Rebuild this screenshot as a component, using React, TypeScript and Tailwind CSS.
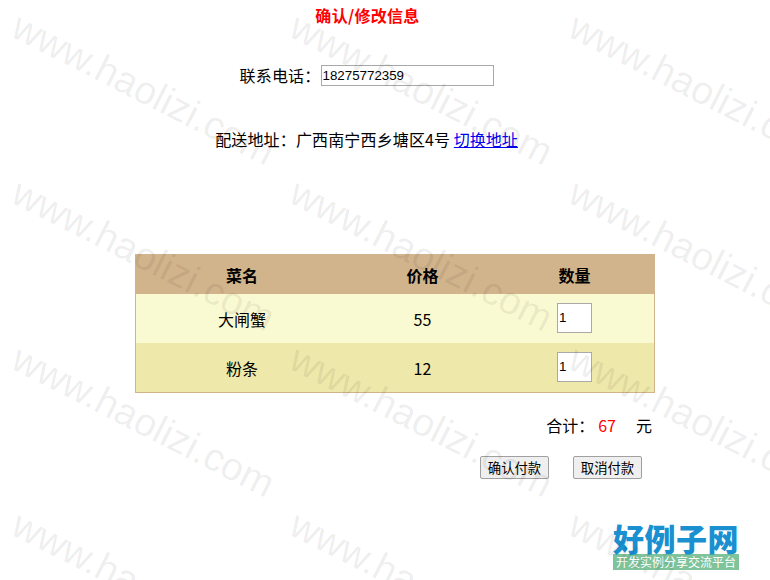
const cjk = "font-['Noto_Sans_CJK_SC','Liberation_Sans',sans-serif]";

const items = [
  { name: "大闸蟹", price: 55, rowClass: "bg-[#fafad2]" },
  { name: "粉条", price: 12, rowClass: "bg-[#eee8aa]" },
];

const watermarkXs = [24, 302, 581];
const watermarkYs = [6, 172, 338, 504];

function Watermark() {
  return (
    <div className="pointer-events-none absolute inset-0 overflow-hidden">
      {watermarkYs.flatMap((y) =>
        watermarkXs.map((x) => (
          <span
            key={`${x}-${y}`}
            className="absolute origin-top-left rotate-[27deg] whitespace-nowrap font-['Liberation_Sans',sans-serif] text-[39px] leading-none text-black/[0.075]"
            style={{ left: x, top: y }}
          >
            www.haolizi.com
          </span>
        )),
      )}
    </div>
  );
}

function Logo() {
  return (
    <div className="absolute left-[613px] top-[521px] w-[126px]">
      <div className="text-[31px] font-black leading-[33px] tracking-[0.5px] text-[#1a90d0]">
        好例子网
      </div>
      <div className="h-[16px] whitespace-nowrap bg-[#7ec39a] text-center text-[12px] leading-[16px] text-white">
        开发实例分享交流平台
      </div>
    </div>
  );
}

export default function App() {
  return (
    <div className={`relative h-[580px] w-[770px] overflow-hidden bg-white text-[16px] text-black ${cjk}`}>
      <div className="w-[735px] pt-[4px] text-center">
        <h2 className="text-[16px] font-bold leading-[22px] tracking-[0.3px] text-[#ff0000]">确认/修改信息</h2>
        <div className="mt-[38px] flex h-[22px] items-center justify-center pr-[2px]">
          <span className="tracking-[0.2px]">联系电话：</span>
          <input
            readOnly
            value="18275772359"
            className="h-[21px] w-[173px] border border-[#a9a9a9] bg-white px-[1px] font-['Liberation_Sans',sans-serif] text-[13.33px] text-black outline-none"
          />
        </div>
        <p className="mt-[42px] pr-[2px] leading-[22px]">
          <span className="tracking-[0.15px]">配送地址：广西南宁西乡塘区4号</span>{" "}
          <a href="#" className="text-[#0000ee] underline">
            切换地址
          </a>
        </p>
      </div>

      <table className="ml-[135px] mt-[104px] w-[520px] table-fixed border-separate border-spacing-0 border border-[#d2b48c] text-center">
        <colgroup>
          <col className="w-[212px]" />
          <col className="w-[147px]" />
          <col className="w-[159px]" />
        </colgroup>
        <thead>
          <tr className="h-[39px] bg-[#d2b48c] font-bold">
            <th>菜名</th>
            <th className="pl-[2px]">价格</th>
            <th>数量</th>
          </tr>
        </thead>
        <tbody>
          {items.map((item) => (
            <tr key={item.name} className={`h-[49px] ${item.rowClass}`}>
              <td>{item.name}</td>
              <td className="pl-[2px]">{item.price}</td>
              <td>
                <input
                  readOnly
                  value="1"
                  className="mx-auto block h-[30px] w-[35px] -translate-y-px border border-[#a9a9a9] bg-white px-[1px] font-['Liberation_Sans',sans-serif] text-[13.33px] text-black outline-none"
                />
              </td>
            </tr>
          ))}
        </tbody>
      </table>

      <div className="ml-[135px] mt-[21px] flex w-[517px] justify-end leading-[22px]">
        <span>合计：</span>
        <span className="ml-[4px] text-[#ff0000]">67</span>
        <span className="ml-[20px]">元</span>
      </div>

      <div className="ml-[480px] mt-[20px] flex gap-[24px]">
        <button className="h-[23px] w-[69px] rounded-[2px] border border-[#a0a0a0] bg-[#efefef] text-[13.33px] leading-none">
          确认付款
        </button>
        <button className="h-[23px] w-[69px] rounded-[2px] border border-[#a0a0a0] bg-[#efefef] text-[13.33px] leading-none">
          取消付款
        </button>
      </div>

      <Logo />
      <Watermark />
    </div>
  );
}
